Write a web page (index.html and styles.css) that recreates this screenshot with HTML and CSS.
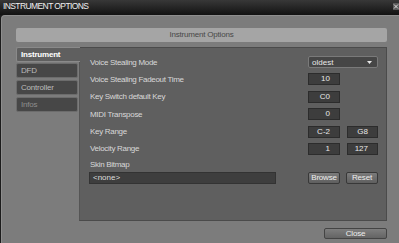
FILE: index.html
```html
<!DOCTYPE html>
<html>
<head>
    <title>Instrument Options</title>
    <link rel="stylesheet" href="styles.css">
</head>
<body>
    <div class="titlebar">
        <span class="title">INSTRUMENT OPTIONS</span>
        <span class="x-btn">
            <svg width="6" height="7" viewBox="0 0 6 7">
                <path d="M1 1.5 L5 5.5 M5 1.5 L1 5.5" stroke="#e0e0e0" stroke-width="1"/>
            </svg>
        </span>
    </div>
    <div class="window">
        <div class="header">Instrument Options</div>
        <div class="main">
            <div class="tabs">
                <div class="tab active">Instrument</div>
                <div class="tab">DFD</div>
                <div class="tab">Controller</div>
                <div class="tab dim">Infos</div>
            </div>
            <div class="panel">
                <div class="row">
                    <span class="label">Voice Stealing Mode</span>
                    <div class="ctrl">
                        <div class="select">
                            <span>oldest</span>
                            <svg width="5" height="3" viewBox="0 0 5 3"><path d="M0 0 H5 L2.5 3 Z" fill="#e8e8e8"/></svg>
                        </div>
                    </div>
                </div>
                <div class="row">
                    <span class="label">Voice Stealing Fadeout Time</span>
                    <div class="ctrl"><div class="num">10</div></div>
                </div>
                <div class="row">
                    <span class="label">Key Switch default Key</span>
                    <div class="ctrl"><div class="num">C0</div></div>
                </div>
                <div class="row">
                    <span class="label">MIDI Transpose</span>
                    <div class="ctrl"><div class="num">0</div></div>
                </div>
                <div class="row">
                    <span class="label">Key Range</span>
                    <div class="ctrl"><div class="num">C-2</div><div class="num">G8</div></div>
                </div>
                <div class="row">
                    <span class="label">Velocity Range</span>
                    <div class="ctrl"><div class="num">1</div><div class="num">127</div></div>
                </div>
                <div class="label skin">Skin Bitmap</div>
                <div class="bitmap-row">
                    <div class="path">&lt;none&gt;</div>
                    <div class="btns">
                        <button class="btn">Browse</button>
                        <button class="btn">Reset</button>
                    </div>
                </div>
            </div>
        </div>
        <div class="footer">
            <button class="btn close">Close</button>
        </div>
    </div>
</body>
</html>
```

FILE: styles.css
```css
* {
    box-sizing: border-box;
}
body {
    margin: 0;
    width: 399px;
    height: 243px;
    overflow: hidden;
    background-color: #1c1c1c;
    font-family: "Liberation Sans", Arial, sans-serif;
    font-size: 8px;
}
.titlebar {
    height: 15px;
    display: flex;
    justify-content: space-between;
    align-items: flex-start;
    padding-left: 3px;
    background: linear-gradient(#383838, #1c1c1c 75%, #121212);
}
.title {
    color: #eeeeee;
    font-size: 8.5px;
    letter-spacing: -0.6px;
    line-height: 13px;
}
.x-btn {
    display: flex;
    width: 6px;
    height: 7px;
    margin-top: 3px;
    background-color: #5a5a5a;
}
.window {
    height: 228px;
    margin-left: 1px;
    padding: 12px 12px 0 14px;
    background-color: #7c7c7c;
    border-top: 1px solid #8e8e8e;
    border-left: 1px solid #8e8e8e;
    border-top-left-radius: 4px;
}
.header {
    height: 14px;
    line-height: 14px;
    margin-bottom: 5px;
    text-align: center;
    color: #484848;
    background-color: #a5a5a5;
    border-radius: 2px;
    letter-spacing: -0.2px;
}
.main {
    display: flex;
    height: 174px;
}
.tabs {
    width: 63px;
    display: flex;
    flex-direction: column;
    gap: 2px;
}
.tab {
    height: 15px;
    line-height: 13px;
    margin-right: 1px;
    padding-left: 4px;
    color: #bcbcbc;
    background-color: #474747;
    border: 1px solid #6c6c6c;
    border-radius: 2px;
    letter-spacing: -0.2px;
}
.tab.active {
    position: relative;
    z-index: 1;
    margin-right: -1px;
    margin-bottom: -1px;
    color: #ffffff;
    font-weight: bold;
    background-color: #5f5f5f;
    border-color: #8a8a8a;
    border-right: none;
    border-radius: 2px 0 0 2px;
}
.tab.dim {
    color: #8e8e8e;
}
.panel {
    flex: 1;
    padding: 8px 8px 0 9px;
    background-color: #5f5f5f;
    border: 1px solid #4b4b4b;
    border-left-color: #555555;
}
.row {
    display: flex;
    align-items: center;
    height: 12px;
    margin-bottom: 5.4px;
}
.label {
    flex: 1;
    padding-left: 1px;
    color: #d8d8d8;
    letter-spacing: -0.3px;
}
.ctrl {
    width: 70px;
    display: flex;
    justify-content: space-between;
}
.num {
    width: 32px;
    height: 12px;
    line-height: 10px;
    padding-right: 9px;
    text-align: right;
    color: #e8e8e8;
    background-color: #3d3d3d;
    border: 1px solid #2c2c2c;
}
.num + .num {
    width: 31px;
}
.select {
    width: 70px;
    height: 12px;
    display: flex;
    justify-content: space-between;
    align-items: center;
    padding: 0 5px 0 3px;
    color: #e8e8e8;
    background-color: #464646;
    border: 1px solid #7a7a7a;
    border-radius: 2px;
}
.skin {
    height: 10px;
    line-height: 10px;
    margin-top: -0.4px;
    margin-bottom: 2px;
}
.bitmap-row {
    display: flex;
    justify-content: space-between;
    height: 12px;
}
.path {
    width: 187px;
    height: 12px;
    line-height: 10px;
    padding-left: 3px;
    color: #dddddd;
    background-color: #3e3e3e;
    border: 1px solid #333333;
}
.btns {
    display: flex;
    gap: 6px;
}
.btn {
    width: 32px;
    height: 12px;
    padding: 0;
    color: #eeeeee;
    font-family: "Liberation Sans", Arial, sans-serif;
    font-size: 8px;
    line-height: 10px;
    letter-spacing: -0.2px;
    background: linear-gradient(#7b7b7b, #5f5f5f);
    border: 1px solid #383838;
    border-radius: 2px;
}
.footer {
    display: flex;
    justify-content: flex-end;
    margin-top: 7px;
}
.btn.close {
    width: 63px;
    height: 11px;
    line-height: 9px;
    background: linear-gradient(#7e7e7e, #646464);
    border-color: #444444;
}
```
